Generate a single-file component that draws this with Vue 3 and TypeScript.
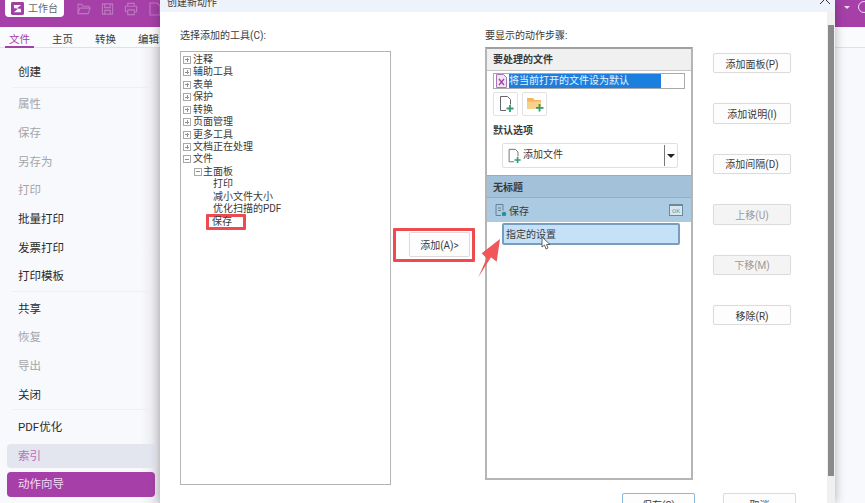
<script setup lang="ts">
interface SideItem { label: string; muted?: boolean; divider?: boolean; state?: string }
const sideItems: SideItem[] = [
  { label: '创建', divider: true },
  { label: '属性', muted: true },
  { label: '保存', muted: true },
  { label: '另存为', muted: true },
  { label: '打印', muted: true },
  { label: '批量打印' },
  { label: '发票打印' },
  { label: '打印模板', divider: true },
  { label: '共享' },
  { label: '恢复', muted: true },
  { label: '导出', muted: true },
  { label: '关闭', divider: true },
  { label: 'PDF优化' },
  { label: '索引', state: 'hover' },
  { label: '动作向导', state: 'active' },
]
const tabs = ['文件', '主页', '转换', '编辑']
const closedNodes = ['注释', '辅助工具', '表单', '保护', '转换', '页面管理', '更多工具', '文档正在处理']
const leaves = ['打印', '减小文件大小', '优化扫描的PDF']
const sideButtons = [
  { label: '添加面板(P)' },
  { label: '添加说明(I)' },
  { label: '添加间隔(D)' },
  { label: '上移(U)', off: true },
  { label: '下移(M)', off: true },
  { label: '移除(R)' },
]
</script>

<template>
  <div class="page">
    <header class="topbar">
      <div class="home">
        <svg class="logo" width="13" height="13" viewBox="0 0 14 14">
          <rect width="14" height="14" rx="1.5" fill="#a23fa6" />
          <path d="M3 3.2h8L5.6 7.4h4.8L11 11H3l5.2-4.2H3.4z" fill="#fff" />
        </svg>
        <span>工作台</span>
      </div>
      <svg class="tool first" width="14" height="14" viewBox="0 0 15 14" fill="none" stroke="#bd77bf" stroke-width="1.2"><path d="M1 12V2h4l1.5 2H13v2M1 12l2-6h11l-2 6z" /></svg>
      <svg class="tool" width="13" height="14" viewBox="0 0 14 14" fill="none" stroke="#bd77bf" stroke-width="1.2"><path d="M1.5 1.5h11v11h-11zM4 1.5v4h6v-4M4 12.5v-4h6v4" /></svg>
      <svg class="tool" width="14" height="14" viewBox="0 0 15 14" fill="none" stroke="#bd77bf" stroke-width="1.2"><path d="M4 4V1h7v3M4 10H1.5V4h12v6H11M4 8h7v5H4z" /></svg>
      <svg class="tool" width="14" height="14" viewBox="0 0 14 14" fill="none" stroke="#bd77bf" stroke-width="1.2"><path d="M2 1h7l3 3v9H2z" /></svg>
      <div class="top-right">
        <span class="caret"></span>
        <span class="avatar"></span>
      </div>
    </header>
    <nav class="tabs">
      <span v-for="(t, i) in tabs" :key="t" class="tab" :class="{ on: i === 0 }">{{ t }}</span>
    </nav>
    <aside class="side">
      <template v-for="item in sideItems" :key="item.label">
        <div class="side-item" :class="[item.state, { muted: item.muted }]">{{ item.label }}</div>
        <div v-if="item.divider" class="side-line"></div>
      </template>
    </aside>

    <section class="dialog">
      <div class="main">
        <div class="title">
          <span>创建新动作</span>
          <svg width="10" height="10" viewBox="0 0 10 10" class="close" fill="none" stroke="#333" stroke-width="1"><path d="M0 0l10 10M10 0L0 10" /></svg>
        </div>
        <div class="body">
          <div class="col-left">
            <div class="label">选择添加的工具(C):</div>
            <div class="tree">
              <div v-for="n in closedNodes" :key="n" class="node">
                <span class="exp plus"></span>{{ n }}
              </div>
              <div class="node"><span class="exp"></span>文件</div>
              <div class="node lvl2"><span class="exp"></span>主面板</div>
              <div v-for="l in leaves" :key="l" class="node lvl3">{{ l }}</div>
              <div class="node lvl3b"><span class="mark">保存</span></div>
            </div>
          </div>
          <div class="col-mid">
            <div class="mark-add"><button class="btn add">添加(A)&gt;</button></div>
          </div>
          <div class="col-right">
            <div class="label short">要显示的动作步骤:</div>
            <div class="panel">
              <div class="sec-head">要处理的文件</div>
              <div class="file-input">
                <svg width="11" height="14" viewBox="0 0 11 14" class="file-ic"><path d="M.5.5h7l3 3v10H.5z" fill="#f0e4f4" stroke="#a876b6" /><path d="M3 5l5 6M8 5l-5 6" stroke="#a23fa6" stroke-width="1.3" /></svg>
                <span class="sel">将当前打开的文件设为默认</span>
              </div>
              <div class="icon-row">
                <span class="icon-btn">
                  <svg width="18" height="18" viewBox="0 0 18 18" fill="none"><path d="M3.5 1.5h7l3 3v5M3.5 1.5v14H9" stroke="#666" /><path d="M13 10v7M9.5 13.5h7" stroke="#2f9e6e" stroke-width="1.8" /></svg>
                </span>
                <span class="icon-btn">
                  <svg width="18" height="18" viewBox="0 0 18 18" fill="none"><path d="M1 3h6l1.5 2H15v9H1z" fill="#f2b65c" /><path d="M1 6.5h14V14H1z" fill="#f8cf8b" /><path d="M13.5 9v7.5M10 12.8h7.5" stroke="#2f9e6e" stroke-width="1.8" /></svg>
                </span>
              </div>
              <div class="opt-title">默认选项</div>
              <div class="select">
                <svg width="16" height="16" viewBox="0 0 18 18" fill="none"><path d="M3.5 1.5h7l3 3v5M3.5 1.5v14H9" stroke="#666" /><path d="M13 10v7M9.5 13.5h7" stroke="#2f9e6e" stroke-width="1.8" /></svg>
                <span class="select-text">添加文件</span>
                <span class="select-arrow"></span>
              </div>
              <div class="untitled">无标题</div>
              <div class="save-row">
                <svg width="12" height="13" viewBox="0 0 12 13" fill="none"><path d="M1 .5h7v6M1 .5v11h5M3 4h3M3 6.5h3" stroke="#6b7f92" /><circle cx="9" cy="10" r="2.3" fill="#2d8f9e" /></svg>
                <span class="save-text">保存</span>
                <span class="ok">OK</span>
              </div>
              <div class="spec">指定的设置</div>
            </div>
          </div>
          <div class="col-btns">
            <button v-for="b in sideButtons" :key="b.label" class="btn side-btn" :class="{ off: b.off }">{{ b.label }}</button>
          </div>
        </div>
        <div class="footer">
          <button class="btn foot primary">保存(S)</button>
          <button class="btn foot">取消</button>
        </div>
        <svg class="arrow" width="23" height="40" viewBox="0 0 23 40"><path d="M.3 39.3L8.7 20.3 3.7 15.3 22 1 18.700 23.700 13 19.300z" fill="#f0565a" /></svg>
        <svg class="cursor" width="10" height="14" viewBox="0 0 10 14"><path d="M1 1v10l2.500-2 1.500 4 2-1-1.500-3.500H9z" fill="#fff" stroke="#555" stroke-width=".9" /></svg>
      </div>
      <div class="scroll"><div class="thumb"></div></div>
    </section>
  </div>
</template>

<style>
html, body { margin: 0; overflow: hidden; }
</style>

<style scoped>
.page {
  position: relative;
  width: 865px;
  height: 503px;
  overflow: hidden;
  background: #f8f9fc;
  font-family: Roboto, "Noto Sans CJK SC", sans-serif;
  color: #3a3a3a;
  font-size: 10px;
}
.topbar {
  height: 27px;
  background: #a640a8;
  display: flex;
  align-items: flex-start;
  padding-left: 5px;
  box-sizing: border-box;
}
.home {
  width: 59px;
  height: 17px;
  background: #fff;
  border-radius: 0 0 4px 4px;
  display: flex;
  align-items: center;
  gap: 4px;
  padding-left: 6px;
  box-sizing: border-box;
  color: #666;
  line-height: 17px;
}
.tool { margin: 2px 0 0 10px; }
.tool.first { margin-left: 13px; }
.top-right {
  margin-left: auto;
  display: flex;
  align-items: center;
  gap: 8px;
  height: 14px;
  margin-right: -5px;
}
.caret {
  width: 0;
  height: 0;
  border: 3px solid transparent;
  border-top: 3px solid #f3dcf3;
  border-bottom: 0;
}
.avatar {
  width: 10px;
  height: 10px;
  border: 1.5px solid #f3dcf3;
  border-radius: 50%;
}
.tabs {
  height: 21px;
  display: flex;
  padding-left: 5px;
  background: #fafbfd;
  border-bottom: 1px solid #dfe1ea;
  box-sizing: border-box;
  gap: 14px;
}
.tab {
  width: 29px;
  text-align: center;
  font-size: 10.5px;
  line-height: 25px;
  height: 21px;
  box-sizing: border-box;
}
.tab.on {
  color: #a640a8;
  border-bottom: 2px solid #a640a8;
}
.side {
  width: 160px;
  height: 455px;
  box-sizing: border-box;
  padding: 10px 5px 0 7px;
  background: linear-gradient(90deg, #f8f9fc 88%, #e6e6ea 100%);
}
.side-item {
  height: 28.7px;
  line-height: 28.7px;
  padding-left: 11px;
  font-size: 11.5px;
  color: #2b2b2b;
  border-radius: 4px;
}
.side-item.muted { color: #a5a5a8; }
.side-line {
  height: 1px;
  margin: 0 6px 2.6px 5px;
  background: #eeeff4;
}
.side-item.hover {
  background: #e3e6ee;
  color: #b96fbb;
  height: 24px;
  line-height: 24px;
  margin-top: 2.6px;
  margin-bottom: 4px;
}
.side-item.active {
  background: #a640a8;
  color: #f3dcf3;
  height: 25px;
  line-height: 25px;
}
.dialog {
  position: absolute;
  left: 160px;
  top: 0;
  width: 675px;
  height: 503px;
  background: #fff;
  box-shadow: 0 0 10px rgba(0, 0, 0, .3);
  display: flex;
  overflow: hidden;
}
.main {
  position: relative;
  flex: 1;
  min-width: 0;
}
.title {
  height: 12px;
  background: #eef2fb;
  overflow: hidden;
  line-height: 6px;
  padding-left: 7px;
  position: relative;
  width: 675px;
  box-sizing: border-box;
}
.close { position: absolute; right: 5px; top: -6px; }
.body {
  display: flex;
  padding: 17px 0 0 20px;
  height: 469px;
  box-sizing: border-box;
}
.col-left { width: 211px; }
.label { height: 14px; line-height: 14px; margin-bottom: 8px; }
.label.short { margin-bottom: 4px; }
.tree {
  height: 434px;
  box-sizing: border-box;
  border: 1px solid #b5b5b5;
  padding-top: 1.5px;
}
.node {
  height: 12.48px;
  display: flex;
  align-items: center;
  padding-left: 2px;
  white-space: nowrap;
  line-height: 12px;
}
.lvl2 { padding-left: 13px; }
.lvl2 .exp { margin-right: 1px; }
.lvl3 { padding-left: 32px; }
.lvl3b { padding-left: 25px; }
.exp {
  width: 8px;
  height: 8px;
  box-sizing: border-box;
  border: 1px solid #a9a9a9;
  margin-right: 2px;
  flex: none;
  background: linear-gradient(#8f8f8f, #8f8f8f) center / 4px 1px no-repeat;
}
.exp.plus {
  background:
    linear-gradient(#8f8f8f, #8f8f8f) center / 4px 1px no-repeat,
    linear-gradient(#8f8f8f, #8f8f8f) center / 1px 4px no-repeat;
}
.mark {
  width: 40px;
  height: 16px;
  box-sizing: border-box;
  border: 3px solid #ee4a50;
  border-radius: 1px;
  padding-left: 3px;
  line-height: 10px;
  flex: none;
}
.col-mid { width: 94px; padding: 199px 0 0 2px; box-sizing: border-box; }
.mark-add {
  width: 82px;
  height: 34px;
  box-sizing: border-box;
  border: 3px solid #ee4a50;
  border-radius: 1px;
  padding: 1px 0 0 13px;
}
.btn {
  font: inherit;
  color: #3a3a3a;
  background: #fdfdfd;
  border: 1px solid #dcdcdc;
  border-radius: 2px;
  padding: 0;
  box-shadow: 0 0 1px rgba(0, 0, 0, .08);
}
.add { width: 61px; height: 25px; }
.col-right { width: 208px; }
.panel {
  height: 433px;
  box-sizing: border-box;
  border: 2px solid #b5b5b5;
  border-top-color: #a0a0a0;
}
.sec-head {
  height: 22px;
  line-height: 22px;
  background: #f0f0f0;
  border-bottom: 1px solid #c4c4c4;
  padding-left: 6px;
  font-weight: 700;
  box-sizing: border-box;
}
.file-input {
  margin: 2px 6px 0 6px;
  height: 16px;
  border: 1px solid #aaa;
  display: flex;
  align-items: center;
  box-sizing: border-box;
}
.file-ic { margin: 0 2px 0 2px; flex: none; }
.sel {
  background: #1b7fe0;
  color: #e9f3fd;
  width: 152px;
  height: 14px;
  line-height: 14px;
}
.icon-row {
  display: flex;
  gap: 4px;
  margin: 3px 0 0 6px;
}
.icon-btn {
  width: 25px;
  height: 24px;
  border: 1px solid #e2e2e2;
  border-radius: 2px;
  box-sizing: border-box;
  display: flex;
  align-items: center;
  justify-content: center;
}
.opt-title {
  margin: 8px 0 0 6px;
  height: 14px;
  line-height: 14px;
  font-weight: 700;
}
.select {
  margin: 5px 0 0 15px;
  width: 176px;
  height: 25px;
  box-sizing: border-box;
  border: 1px solid #e0e0e0;
  border-radius: 2px;
  display: flex;
  align-items: center;
  padding-left: 3px;
}
.select-text { margin-left: 1px; flex: 1; line-height: 22px; height: 23px; }
.select-arrow {
  width: 13px;
  height: 21px;
  border-left: 1px solid #777;
  position: relative;
  box-sizing: border-box;
}
.select-arrow::after {
  content: "";
  position: absolute;
  left: 2px;
  top: 9px;
  border: 4px solid transparent;
  border-top: 4px solid #222;
  border-bottom: 0;
}
.untitled {
  margin-top: 7px;
  height: 23px;
  line-height: 23px;
  background: #a3c2da;
  border-top: 1px solid #8fb0c9;
  border-bottom: 1px solid #8fb0c9;
  padding-left: 6px;
  font-weight: 700;
  box-sizing: border-box;
}
.save-row {
  height: 24px;
  background: #abcbe3;
  display: flex;
  align-items: center;
  padding: 0 8px 0 8px;
}
.save-text { margin-left: 2px; flex: 1; }
.ok {
  width: 12px;
  height: 9px;
  border: 1px solid #6a8aa0;
  border-top-width: 2px;
  background: #d8e6ee;
  color: #4b9aa5;
  font-size: 6px;
  line-height: 9px;
  text-align: center;
}
.spec {
  margin: 1px 0 0 15px;
  width: 178px;
  height: 22px;
  box-sizing: border-box;
  background: #c5e1f8;
  border: 2px solid #7a9dbd;
  border-radius: 2px;
  padding-left: 2px;
  line-height: 19px;
}
.col-btns {
  margin-left: 20px;
  width: 78px;
  padding-top: 24px;
  display: flex;
  flex-direction: column;
  gap: 30px;
}
.side-btn { height: 20.4px; flex: none; }
.side-btn.off { color: #9a9a9a; background: #f4f4f4; }
.footer {
  display: flex;
  justify-content: flex-end;
  gap: 28px;
  padding: 12px 31px 0 0;
}
.foot { width: 73px; height: 22px; flex: none; }
.primary { border-color: #8ab9dd; }
.arrow { position: absolute; left: 318px; top: 238px; }
.cursor { position: absolute; left: 381px; top: 236px; }
.scroll {
  width: 8px;
  margin-top: 12px;
  background: #f0f0f0;
  padding-top: 13px;
  flex: none;
  box-sizing: border-box;
  height: 491px;
  display: flex;
  justify-content: center;
}
.thumb { width: 6px; height: 451px; background: #8a8a8a; }
</style>
